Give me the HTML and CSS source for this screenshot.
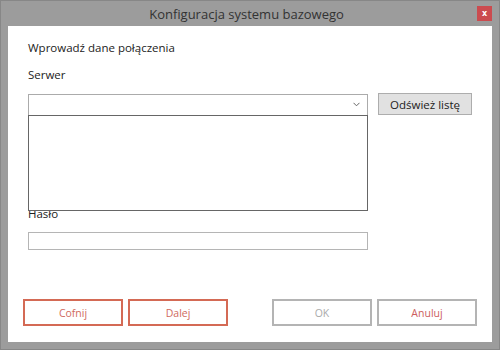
FILE: index.html
```html
<!DOCTYPE html>
<html lang="pl">
<head>
    <meta charset="UTF-8">
    <title>Konfiguracja systemu bazowego</title>
    <link rel="stylesheet" href="styles.css">
</head>
<body>
    <div class="window">
        <div class="titlebar">
            <span></span>
            <span class="title">Konfiguracja systemu bazowego</span>
            <button class="close">x</button>
        </div>

        <div class="content">
            <div class="heading">Wprowadź dane połączenia</div>

            <div class="label">Serwer</div>
            <div class="server-row">
                <div class="combo">
                    <svg class="chevron" width="7" height="5" viewBox="0 0 7 5">
                        <polyline points="0.5,0.8 3.5,3.8 6.5,0.8" fill="none" stroke="#666" stroke-width="1"/>
                    </svg>
                    <div class="dropdown"></div>
                </div>
                <button class="refresh">Odśwież listę</button>
            </div>

            <div class="label gap">Użytkownik</div>
            <div class="input"></div>

            <div class="label gap">Hasło</div>
            <div class="input"></div>

            <div class="footer">
                <div class="group">
                    <button class="btn accent">Cofnij</button>
                    <button class="btn accent">Dalej</button>
                </div>
                <div class="group">
                    <button class="btn disabled">OK</button>
                    <button class="btn cancel">Anuluj</button>
                </div>
            </div>
        </div>
    </div>
</body>
</html>
```

FILE: styles.css
```css
body {
    margin: 0;
    font-family: "Open Sans", "Noto Sans", sans-serif;
}

.window {
    width: 500px;
    height: 350px;
    box-sizing: border-box;
    border: 1px solid #878787;
    background: #9c9c9c;
    display: flex;
    flex-direction: column;
}

.titlebar {
    height: 25px;
    display: grid;
    grid-template-columns: 1fr auto 1fr;
    align-items: center;
    padding-right: 7px;
}
.title {
    font-size: 13px;
    color: #333;
}
.close {
    justify-self: end;
    width: 15px;
    height: 15px;
    margin-top: -1px;
    padding: 0;
    border: none;
    background: #cb4b4f;
    color: #fff;
    font-family: "DejaVu Sans", sans-serif;
    font-size: 8px;
    font-weight: bold;
    line-height: 15px;
}

.content {
    flex: 1;
    margin: 0 7px 7px 7px;
    background: #fff;
    padding: 14px 0 0 20px;
    display: flex;
    flex-direction: column;
    font-size: 11.5px;
    color: #222;
}

.heading {
    line-height: 16px;
}
.label {
    line-height: 16px;
    margin-top: 11px;
    margin-bottom: 11px;
}
.label.gap {
    margin-top: 23px;
    margin-bottom: 10px;
}

.server-row {
    display: flex;
    gap: 10px;
    align-items: flex-start;
}
.combo {
    position: relative;
    width: 340px;
    height: 22px;
    box-sizing: border-box;
    border: 1px solid #ababab;
}
.chevron {
    position: absolute;
    right: 7px;
    top: 7px;
}
.dropdown {
    position: absolute;
    left: -1px;
    top: 20px;
    width: 340px;
    height: 96px;
    box-sizing: border-box;
    border: 1px solid #666;
    background: #fff;
    z-index: 5;
}
.refresh {
    width: 94px;
    height: 22px;
    margin-top: -1px;
    border: 1px solid #adadad;
    background: #e1e1e1;
    font-family: inherit;
    font-size: 11.5px;
    color: #222;
    padding: 0;
}

.input {
    width: 340px;
    height: 18px;
    box-sizing: border-box;
    border: 1px solid #b5b5b5;
}

.footer {
    margin-top: auto;
    margin-left: -5px;
    padding: 0 15px 16px 0;
    display: flex;
    justify-content: space-between;
}
.group {
    display: flex;
    gap: 5px;
}
.btn {
    width: 100px;
    height: 27px;
    background: #fff;
    border: 2px solid #d46a55;
    font-family: inherit;
    font-size: 10.5px;
    color: #d06a5e;
    padding: 0;
}
.btn.disabled {
    border-color: #b4b4b4;
    color: #aaa;
}
.btn.cancel {
    border-color: #b4b4b4;
    color: #cc5e5e;
}
```
